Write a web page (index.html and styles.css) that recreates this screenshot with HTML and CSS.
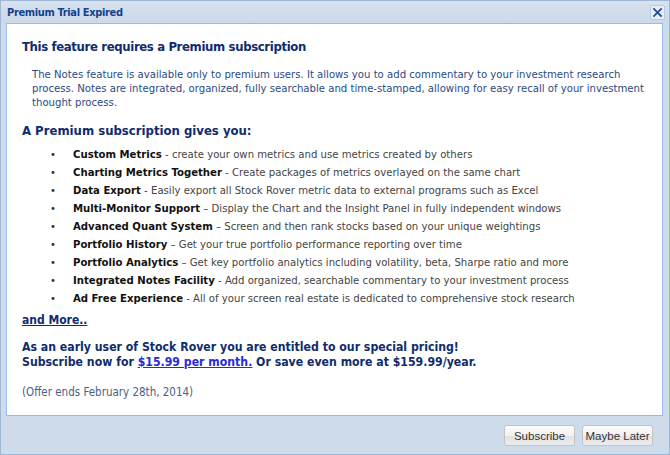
FILE: index.html
```html
<!DOCTYPE html>
<html>
<head>
<meta charset="utf-8">
<link rel="stylesheet" href="styles.css">
</head>
<body>
<div class="dialog">
  <div class="titlebar">
    <span class="title">Premium Trial Expired</span>
    <span class="close"><svg width="11" height="11" viewBox="0 0 11 11"><path d="M2 2 L9 9 M9 2 L2 9" stroke="#2b4f8f" stroke-width="1.8" stroke-linecap="square"/></svg></span>
  </div>
  <div class="panel">
    <h1 class="h1">This feature requires a Premium subscription</h1>
    <p class="intro">The Notes feature is available only to premium users. It allows you to add commentary to your investment research process. Notes are integrated, organized, fully searchable and time-stamped, allowing for easy recall of your investment thought process.</p>
    <h2 class="h2">A Premium subscription gives you:</h2>
    <ul class="features">
      <li><b>Custom Metrics</b> - create your own metrics and use metrics created by others</li>
      <li><b>Charting Metrics Together</b> - Create packages of metrics overlayed on the same chart</li>
      <li><b>Data Export</b> - Easily export all Stock Rover metric data to external programs such as Excel</li>
      <li><b>Multi-Monitor Support</b> – Display the Chart and the Insight Panel in fully independent windows</li>
      <li><b>Advanced Quant System</b> – Screen and then rank stocks based on your unique weightings</li>
      <li><b>Portfolio History</b> – Get your true portfolio performance reporting over time</li>
      <li><b>Portfolio Analytics</b> – Get key portfolio analytics including volatility, beta, Sharpe ratio and more</li>
      <li><b>Integrated Notes Facility</b> - Add organized, searchable commentary to your investment process</li>
      <li><b>Ad Free Experience</b> - All of your screen real estate is dedicated to comprehensive stock research</li>
    </ul>
    <a class="more" href="#">and More..</a>
    <p class="offer">As an early user of Stock Rover you are entitled to our special pricing!<br>Subscribe now for <a class="price" href="#">$15.99 per month.</a> Or save even more at $159.99/year.</p>
    <p class="ends">(Offer ends February 28th, 2014)</p>
  </div>
  <div class="buttons">
    <button class="btn">Subscribe</button>
    <button class="btn">Maybe Later</button>
  </div>
</div>
</body>
</html>
```

FILE: styles.css
```css
html, body {
  margin: 0;
  padding: 0;
  background: #cddaea;
}
body {
  font-family: "DejaVu Sans Condensed", "DejaVu Sans", sans-serif;
  width: 670px;
  height: 455px;
  overflow: hidden;
}
.dialog {
  box-sizing: border-box;
  width: 670px;
  height: 455px;
  border: 1px solid #9fb6d4;
  background: #cedbeb;
  display: flex;
  flex-direction: column;
}
.titlebar {
  height: 22px;
  display: flex;
  align-items: center;
  justify-content: space-between;
  padding: 0 4px 0 6px;
  background: linear-gradient(#d7e2ef, #cbd8e9);
}
.title {
  font-size: 11px;
  font-weight: bold;
  letter-spacing: -0.35px;
  color: #15428b;
}
.close {
  width: 15px;
  height: 15px;
  box-sizing: border-box;
  border: 1px solid #b8cbe3;
  border-radius: 2px;
  background: #e6eef8;
  display: flex;
  align-items: center;
  justify-content: center;
}
.panel {
  margin: 0 6px 0 5px;
  height: 393px;
  box-sizing: border-box;
  background: #fff;
  border: 1px solid #99bbe8;
  padding: 15px 14px 0 15px;
  color: #1c3d73;
}
.h1 {
  margin: 0;
  font-size: 13px;
  line-height: 16px;
  font-weight: bold;
  letter-spacing: -0.36px;
  color: #0f2c6c;
}
.intro {
  margin: 13px 0 0 10px;
  font-size: 11.25px;
  line-height: 14px;
  color: #2a4a80;
}
.h2 {
  margin: 13px 0 0 0;
  font-size: 13px;
  line-height: 16px;
  font-weight: bold;
  color: #0f2c6c;
}
.features {
  list-style: none;
  margin: 7px 0 0 0;
  padding: 0 0 0 51px;
  font-size: 11.25px;
  line-height: 18px;
  color: #444;
}
.features li::before {
  content: "•";
  display: inline-block;
  width: 23px;
  margin-left: -23px;
  color: #333;
}
.features b {
  color: #111;
}
.more {
  display: block;
  margin-top: 4px;
  font-size: 12px;
  line-height: 16px;
  font-weight: bold;
  color: #0f2c6c;
  text-decoration: underline;
}
.offer {
  margin: 12px 0 0 0;
  font-size: 12.2px;
  line-height: 15px;
  font-weight: bold;
  color: #0f2c6c;
}
.price {
  color: #2a2adb;
  text-decoration: underline;
}
.ends {
  margin: 15px 0 0 0;
  font-size: 11.5px;
  line-height: 14px;
  color: #4a5f86;
}
.buttons {
  display: flex;
  justify-content: flex-end;
  gap: 7px;
  padding: 9px 16px 0 0;
}
.btn {
  height: 21px;
  width: 71px;
  padding: 0;
  font-family: "Liberation Sans", sans-serif;
  font-size: 11.5px;
  color: #333;
  border: 1px solid #c3c3c3;
  border-radius: 3px;
  background: linear-gradient(#fdfdfd 0%, #f1f1f1 50%, #e2e2e2 51%, #ececec 100%);
}
```
